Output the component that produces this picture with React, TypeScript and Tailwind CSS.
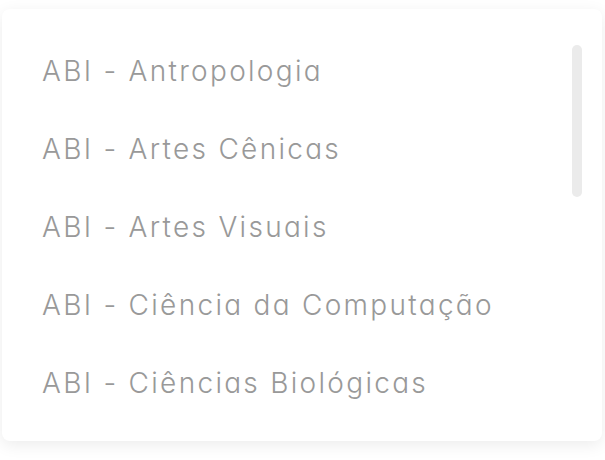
import React from 'react';

const cursos = [
  'ABI - Antropologia',
  'ABI - Artes Cênicas',
  'ABI - Artes Visuais',
  'ABI - Ciência da Computação',
  'ABI - Ciências Biológicas',
];

const App: React.FC = () => {
  return (
    <div className="w-[605px] h-[460px] bg-white pt-[9px] px-[2px]">
      <div className="relative w-[600px] h-[432px] bg-white rounded-lg shadow-[0_4px_16px_rgba(0,0,0,0.08)] overflow-hidden">
        <ul className="pt-[23px] pl-[40px] font-['Inter','Noto_Sans',sans-serif] [font-feature-settings:'cv11']">
          {cursos.map((curso) => (
            <li
              key={curso}
              className="h-[78px] flex items-center text-[28px] font-light text-[#999999] tracking-[2.3px]"
            >
              {curso}
            </li>
          ))}
        </ul>
        {/* barra de rolagem */}
        <div className="absolute top-[36px] left-[570px] w-[10px] h-[152px] rounded-full bg-[#ebebeb]"></div>
      </div>
    </div>
  );
};

export default App;
